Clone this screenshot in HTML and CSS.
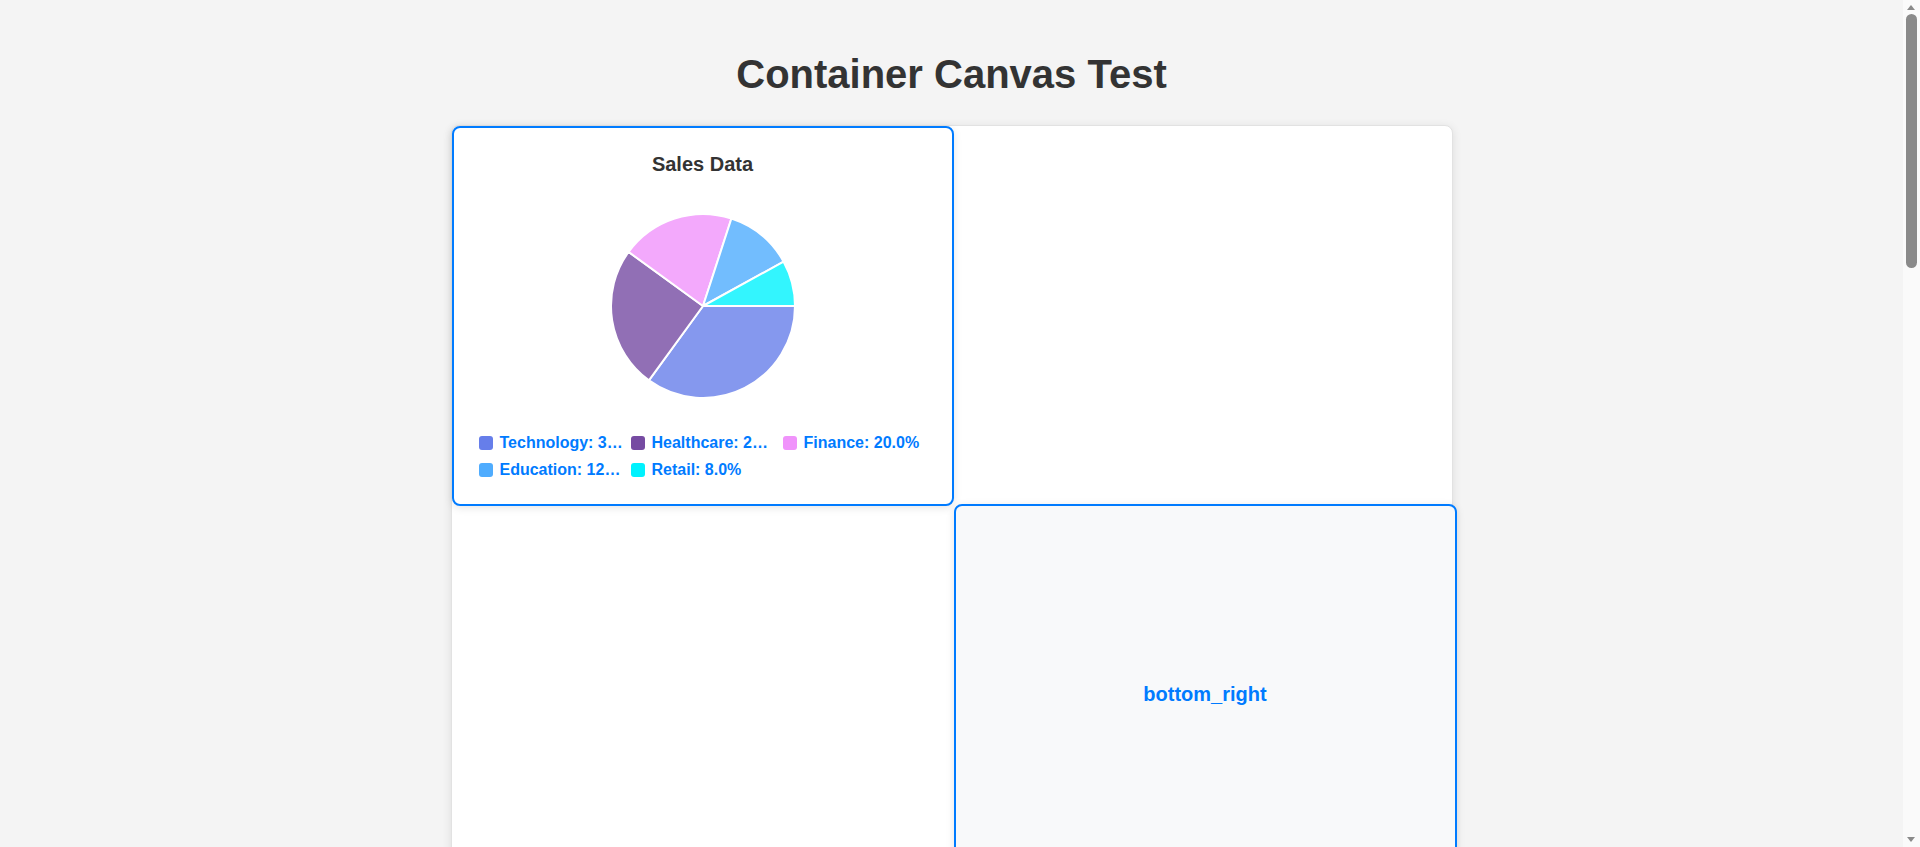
FILE: index.html
```html
<!DOCTYPE html>
<html lang="en">
<head>
<meta charset="utf-8">
<title>Container Canvas Test</title>
<link rel="stylesheet" href="styles.css">
</head>
<body>
  <h1 class="page-title">Container Canvas Test</h1>
  <div class="canvas">
    <div class="cell cell-top-left">
      <div class="chart-title">Sales Data</div>
      <svg class="pie" width="188" height="188" viewBox="0 0 188 188">
        <path d="M94 94 L186 94 A92 92 0 0 1 39.92 168.43 Z" fill="rgba(102,126,234,0.8)"/>
        <path d="M94 94 L39.92 168.43 A92 92 0 0 1 19.57 39.92 Z" fill="rgba(118,75,162,0.8)"/>
        <path d="M94 94 L19.57 39.92 A92 92 0 0 1 122.43 6.5 Z" fill="rgba(240,147,251,0.8)"/>
        <path d="M94 94 L122.43 6.5 A92 92 0 0 1 174.62 49.68 Z" fill="rgba(79,172,254,0.8)"/>
        <path d="M94 94 L174.62 49.68 A92 92 0 0 1 186 94 Z" fill="rgba(0,242,254,0.8)"/>
      </svg>
      <div class="legend">
        <div class="legend-item"><span class="swatch sw-tech"></span><span class="legend-text">Technology: 3…</span></div>
        <div class="legend-item"><span class="swatch sw-health"></span><span class="legend-text">Healthcare: 2…</span></div>
        <div class="legend-item"><span class="swatch sw-fin"></span><span class="legend-text">Finance: 20.0%</span></div>
        <div class="legend-item"><span class="swatch sw-edu"></span><span class="legend-text">Education: 12…</span></div>
        <div class="legend-item"><span class="swatch sw-retail"></span><span class="legend-text">Retail: 8.0%</span></div>
      </div>
    </div>
    <div class="cell cell-bottom-right">
      <span class="cell-label">bottom_right</span>
    </div>
  </div>
  <div class="scrollbar" aria-hidden="true">
    <span class="sb-arrow sb-up"></span>
    <span class="sb-thumb"></span>
    <span class="sb-arrow sb-down"></span>
  </div>
</body>
</html>
```
FILE: styles.css
```css
html, body {
  margin: 0;
  padding: 0;
}
body {
  background: #f4f4f4;
  font-family: "Liberation Sans", Arial, sans-serif;
  color: #333;
  padding: 0 37px 20px 20px;
}
.page-title {
  margin: 51px 0 28px;
  font-size: 40px;
  line-height: 46px;
  font-weight: bold;
  text-align: center;
  color: #333;
}
.canvas {
  position: relative;
  width: 1000px;
  height: 2580px;
  margin: 0 auto;
  background: #fff;
  border: 1px solid #e2e2e2;
  border-radius: 8px;
  box-shadow: 0 2px 10px rgba(0, 0, 0, 0.1);
  box-sizing: content-box;
}
.cell {
  position: absolute;
  box-sizing: border-box;
  width: 502px;
  height: 380px;
  border: 2px solid #007bff;
  border-radius: 8px;
  box-shadow: 0 2px 8px rgba(0, 0, 0, 0.1);
}
.cell-top-left {
  left: 0;
  top: 0;
  background: #fff;
  display: flex;
  flex-direction: column;
  align-items: center;
  justify-content: center;
  padding: 0 25px;
  z-index: 1;
}
.cell-bottom-right {
  left: 502px;
  top: 378px;
  width: 503px;
  background: #f8f9fa;
  display: flex;
  align-items: center;
  justify-content: center;
  z-index: 2;
}
.chart-title {
  font-size: 20px;
  line-height: 23px;
  font-weight: bold;
  color: #333;
}
.pie {
  display: block;
  margin: 36px 0 34px;
}
.pie path {
  stroke: #fff;
  stroke-width: 2;
  stroke-linejoin: round;
}
.legend {
  width: 100%;
  display: grid;
  grid-template-columns: repeat(3, 1fr);
  column-gap: 8px;
  row-gap: 8px;
}
.legend-item {
  display: flex;
  align-items: center;
  height: 19px;
  min-width: 0;
}
.swatch {
  flex: 0 0 14px;
  width: 14px;
  height: 14px;
  border-radius: 3px;
  margin-right: 7px;
}
.sw-tech { background: #667eea; }
.sw-health { background: #764ba2; }
.sw-fin { background: #f093fb; }
.sw-edu { background: #4facfe; }
.sw-retail { background: #00f2fe; }
.legend-text {
  font-size: 16px;
  font-weight: bold;
  color: #007bff;
  white-space: nowrap;
}
.cell-label {
  font-size: 20px;
  font-weight: bold;
  color: #007bff;
}

/* imitation of the window's vertical scrollbar */
.scrollbar {
  position: fixed;
  top: 0;
  right: 0;
  bottom: 0;
  width: 17px;
  background: #fafafa;
  z-index: 10;
}
.sb-thumb {
  position: absolute;
  left: 3px;
  top: 14px;
  width: 11px;
  height: 254px;
  border-radius: 6px;
  background: #8a8a8a;
}
.sb-arrow {
  position: absolute;
  left: 4px;
  width: 0;
  height: 0;
  border-left: 4.5px solid transparent;
  border-right: 4.5px solid transparent;
}
.sb-up {
  top: 5px;
  border-bottom: 5px solid #8a8a8a;
}
.sb-down {
  bottom: 5px;
  border-top: 5px solid #8a8a8a;
}
```
